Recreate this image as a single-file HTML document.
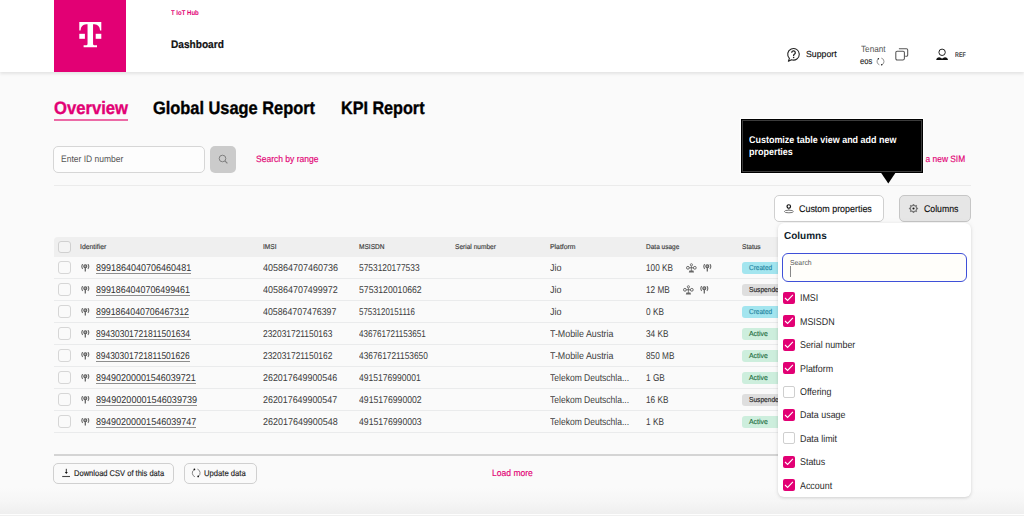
<!DOCTYPE html>
<html><head><meta charset="utf-8">
<style>
*{box-sizing:border-box;margin:0;padding:0}
html,body{width:1024px;height:516px;overflow:hidden}
body{font-family:"Liberation Sans",sans-serif;background:#fafafa;position:relative;color:#222}
.a{position:absolute;white-space:nowrap;line-height:1;transform-origin:0 0;text-rendering:geometricPrecision}
.box{position:absolute}
</style></head><body>
<div class="box" style="left:0;top:488px;width:1024px;height:26px;background:linear-gradient(#fafafa 0%,#f6f6f6 50%,#efefef 100%)"></div>
<div class="box" style="left:0;top:514px;width:1024px;height:1px;background:#fefefe"></div>
<div class="box" style="left:0;top:515px;width:1024px;height:1px;background:#f0f0f0"></div>
<div class="box" style="left:0;top:0;width:1024px;height:72px;background:#fff;box-shadow:0 2px 3px rgba(0,0,0,.09)"></div>
<div class="box" style="left:54px;top:0;width:72px;height:72px;background:#e20074">
<svg width="72" height="72" viewBox="0 0 72 72" style="position:absolute;left:0;top:0">
<path fill="#fff" d="M25.3 22 H47.3 V30.4 H46.1 C45.8 26.6 43.9 24.5 40.4 24.3 H39.05 V43.4 C39.05 44.8 39.6 45.3 41.2 45.3 H43 V47.3 H29.6 V45.3 H31.4 C33 45.3 33.55 44.8 33.55 43.4 V24.3 H32.2 C28.7 24.5 26.8 26.6 26.5 30.4 H25.3 Z"/>
<rect fill="#fff" x="25.3" y="33.8" width="5.6" height="5"/>
<rect fill="#fff" x="41.7" y="33.8" width="5.6" height="5"/>
</svg></div>
<div class="a" style="left:171.00px;top:9.67px;font-size:7px;font-weight:bold;color:#e20074;transform:scaleX(0.86);">T IoT Hub</div>
<div class="a" style="left:171.00px;top:40.49px;font-size:11px;font-weight:bold;color:#111;transform:scaleX(0.92);-webkit-text-stroke:0.2px #111;">Dashboard</div>
<svg class="a" style="left:786px;top:47px" width="16" height="16" viewBox="0 0 16 16">
<path d="M5.52 12.75 L2.4 14.3 L3.4 11.4 A5.8 5.8 0 1 1 5.52 12.75 Z" fill="none" stroke="#222" stroke-width="1.1" stroke-linejoin="round"/>
<path d="M5.7 5.7 a1.8 1.8 0 1 1 2.5 1.7 c-.5 .2 -.6 .6 -.6 1.2 v.5" fill="none" stroke="#222" stroke-width="1.25"/>
<rect x="6.95" y="9.8" width="1.35" height="1.35" fill="#222"/>
</svg>
<div class="a" style="left:806.00px;top:50.05px;font-size:8.8px;font-weight:normal;color:#111;transform:scaleX(0.995);-webkit-text-stroke:0.15px #111;">Support</div>
<div class="a" style="left:860.80px;top:44.78px;font-size:9px;font-weight:normal;color:#555;transform:scaleX(0.91);">Tenant</div>
<div class="a" style="left:860.20px;top:57.25px;font-size:8.8px;font-weight:normal;color:#222;transform:scaleX(0.86);-webkit-text-stroke:0.15px #222;">eos</div>
<svg class="a" style="left:876px;top:56.5px" width="9" height="9" viewBox="0 0 9 9">
<path d="M2.4 1.7 A3.5 3.5 0 0 0 3.4 7.8 M5.3 1.1 A3.5 3.5 0 0 1 5.7 7.8" fill="none" stroke="#888" stroke-width=".9"/>
<circle cx="2.4" cy="1.7" r=".75" fill="#222"/><circle cx="5.7" cy="7.8" r=".75" fill="#222"/>
</svg>
<svg class="a" style="left:894px;top:46px" width="16" height="16" viewBox="0 0 16 16">
<rect x="1.8" y="5.3" width="8.6" height="8.6" rx="1.3" fill="none" stroke="#555" stroke-width="1.05"/>
<path d="M4.9 2.8 H12.5 a1.2 1.2 0 0 1 1.2 1.2 V9 a1.2 1.2 0 0 1 -1.2 1.2 H11.2" fill="none" stroke="#555" stroke-width="1.05"/>
</svg>
<svg class="a" style="left:935px;top:47px" width="14" height="14" viewBox="0 0 14 14">
<circle cx="7.1" cy="5.3" r="3.2" fill="none" stroke="#222" stroke-width="1"/>
<path d="M1.2 13 C1.5 11.2 2.6 10.3 4.2 10.3 C5.4 10.3 6 11.4 7.1 11.5 C8.2 11.4 8.8 10.3 10 10.3 C11.6 10.3 12.7 11.2 13 13 Z" fill="#111"/>
</svg>
<div class="a" style="left:954.90px;top:53.04px;font-size:6.8px;font-weight:bold;color:#444;transform:scaleX(0.79);">REF</div>
<div class="a" style="left:54.00px;top:99.46px;font-size:18px;font-weight:bold;color:#e20074;transform:scaleX(0.925);-webkit-text-stroke:0.35px #e20074;">Overview</div>
<div class="box" style="left:54px;top:119px;width:74px;height:2px;background:#ec6aa6"></div>
<div class="a" style="left:153.40px;top:99.46px;font-size:18px;font-weight:bold;color:#000;transform:scaleX(0.91);-webkit-text-stroke:0.35px #000;">Global Usage Report</div>
<div class="a" style="left:341.40px;top:99.46px;font-size:18px;font-weight:bold;color:#000;transform:scaleX(0.898);-webkit-text-stroke:0.35px #000;">KPI Report</div>
<div class="box" style="left:53.4px;top:145.6px;width:151.8px;height:27.2px;background:#fdfdfd;border:1px solid #d6d6d6;border-radius:5px"></div>
<div class="a" style="left:61.30px;top:155.23px;font-size:9.3px;font-weight:normal;color:#555;transform:scaleX(0.915);">Enter ID number</div>
<div class="box" style="left:210px;top:146px;width:26px;height:26.5px;background:#cbcbcb;border-radius:5px"></div>
<svg class="a" style="left:217px;top:153px" width="13" height="13" viewBox="0 0 13 13">
<circle cx="5.5" cy="5.5" r="3.3" fill="none" stroke="#808080" stroke-width="1"/>
<path d="M7.9 7.9 L10.4 10.4" stroke="#808080" stroke-width="1.1"/>
</svg>
<div class="a" style="left:256.20px;top:155.23px;font-size:9.3px;font-weight:normal;color:#e20074;transform:scaleX(0.915);-webkit-text-stroke:0.15px #e20074;">Search by range</div>
<div class="a" style="right:58.4px;top:154.7px;font-size:9.3px;color:#e20074;-webkit-text-stroke:0.15px #e20074;transform:scaleX(0.9);transform-origin:100% 0">Register a new SIM</div>
<div class="box" style="left:54px;top:185px;width:917px;height:1px;background:#ebebeb"></div>
<div class="box" style="left:774px;top:195px;width:110px;height:27px;background:#fff;border:1px solid #d0d0d0;border-radius:5px"></div>
<svg class="a" style="left:783px;top:203px" width="12" height="11" viewBox="0 0 12 11">
<ellipse cx="5.9" cy="8.5" rx="4.5" ry="1.3" fill="none" stroke="#777" stroke-width="1"/>
<circle cx="5.8" cy="3.5" r="1.75" fill="none" stroke="#111" stroke-width="1.2"/>
<path d="M5.8 5.2 V6.6" stroke="#444" stroke-width="1"/>
</svg>
<div class="a" style="left:798.70px;top:204.99px;font-size:9.7px;font-weight:normal;color:#111;transform:scaleX(0.92);-webkit-text-stroke:0.15px #111;">Custom properties</div>
<div class="box" style="left:899px;top:195px;width:72px;height:27px;background:#e6e6e6;border:1px solid #c6c6c6;border-radius:5px"></div>
<svg class="a" style="left:908.15px;top:203.25px" width="11" height="11" viewBox="0 0 11 11">
<path fill-rule="evenodd" fill="#7a7a7a" d="M10.10 5.50 L10.10 5.65 L10.09 5.80 L10.08 5.95 L10.06 6.10 L9.77 6.21 L9.46 6.29 L9.15 6.35 L9.12 6.47 L9.09 6.59 L9.05 6.71 L9.01 6.82 L8.96 6.94 L8.92 7.05 L8.86 7.16 L8.81 7.27 L8.75 7.38 L8.68 7.48 L8.85 7.74 L9.02 8.02 L9.15 8.30 L9.06 8.42 L8.96 8.53 L8.86 8.64 L8.75 8.75 L8.64 8.86 L8.53 8.96 L8.42 9.06 L8.30 9.15 L8.02 9.02 L7.74 8.85 L7.48 8.68 L7.38 8.75 L7.27 8.81 L7.16 8.86 L7.05 8.92 L6.94 8.96 L6.82 9.01 L6.71 9.05 L6.59 9.09 L6.47 9.12 L6.35 9.15 L6.29 9.46 L6.21 9.77 L6.10 10.06 L5.95 10.08 L5.80 10.09 L5.65 10.10 L5.50 10.10 L5.35 10.10 L5.20 10.09 L5.05 10.08 L4.90 10.06 L4.79 9.77 L4.71 9.46 L4.65 9.15 L4.53 9.12 L4.41 9.09 L4.29 9.05 L4.18 9.01 L4.06 8.96 L3.95 8.92 L3.84 8.86 L3.73 8.81 L3.63 8.75 L3.52 8.68 L3.26 8.85 L2.98 9.02 L2.70 9.15 L2.58 9.06 L2.47 8.96 L2.36 8.86 L2.25 8.75 L2.14 8.64 L2.04 8.53 L1.94 8.42 L1.85 8.30 L1.98 8.02 L2.15 7.74 L2.32 7.48 L2.25 7.38 L2.19 7.27 L2.14 7.16 L2.08 7.05 L2.04 6.94 L1.99 6.82 L1.95 6.71 L1.91 6.59 L1.88 6.47 L1.85 6.35 L1.54 6.29 L1.23 6.21 L0.94 6.10 L0.92 5.95 L0.91 5.80 L0.90 5.65 L0.90 5.50 L0.90 5.35 L0.91 5.20 L0.92 5.05 L0.94 4.90 L1.23 4.79 L1.54 4.71 L1.85 4.65 L1.88 4.53 L1.91 4.41 L1.95 4.29 L1.99 4.18 L2.04 4.06 L2.08 3.95 L2.14 3.84 L2.19 3.73 L2.25 3.63 L2.32 3.52 L2.15 3.26 L1.98 2.98 L1.85 2.70 L1.94 2.58 L2.04 2.47 L2.14 2.36 L2.25 2.25 L2.36 2.14 L2.47 2.04 L2.58 1.94 L2.70 1.85 L2.98 1.98 L3.26 2.15 L3.52 2.32 L3.62 2.25 L3.73 2.19 L3.84 2.14 L3.95 2.08 L4.06 2.04 L4.18 1.99 L4.29 1.95 L4.41 1.91 L4.53 1.88 L4.65 1.85 L4.71 1.54 L4.79 1.23 L4.90 0.94 L5.05 0.92 L5.20 0.91 L5.35 0.90 L5.50 0.90 L5.65 0.90 L5.80 0.91 L5.95 0.92 L6.10 0.94 L6.21 1.23 L6.29 1.54 L6.35 1.85 L6.47 1.88 L6.59 1.91 L6.71 1.95 L6.82 1.99 L6.94 2.04 L7.05 2.08 L7.16 2.14 L7.27 2.19 L7.38 2.25 L7.48 2.32 L7.74 2.15 L8.02 1.98 L8.30 1.85 L8.42 1.94 L8.53 2.04 L8.64 2.14 L8.75 2.25 L8.86 2.36 L8.96 2.47 L9.06 2.58 L9.15 2.70 L9.02 2.98 L8.85 3.26 L8.68 3.52 L8.75 3.62 L8.81 3.73 L8.86 3.84 L8.92 3.95 L8.96 4.06 L9.01 4.18 L9.05 4.29 L9.09 4.41 L9.12 4.53 L9.15 4.65 L9.46 4.71 L9.77 4.79 L10.06 4.90 L10.08 5.05 L10.09 5.20 L10.10 5.35Z M5.5 3.0 A2.5 2.5 0 1 0 5.5 8.0 A2.5 2.5 0 1 0 5.5 3.0Z"/>
<circle cx="5.5" cy="5.5" r="1.05" fill="#111"/>
</svg>
<div class="a" style="left:923.80px;top:204.99px;font-size:9.7px;font-weight:normal;color:#111;transform:scaleX(0.9);-webkit-text-stroke:0.15px #111;">Columns</div>
<div class="box" style="left:54px;top:237px;width:917px;height:20px;background:#efefef;border-radius:4px 4px 0 0"></div>
<div class="box" style="left:58px;top:240.5px;width:12.5px;height:12.5px;border:1px solid #d0d0d0;border-radius:3px;background:#f4f4f4"></div>
<div class="a" style="left:80.00px;top:243.87px;font-size:7px;font-weight:normal;color:#3a3a3a;transform:scaleX(0.98);-webkit-text-stroke:0.15px #3a3a3a;">Identifier</div>
<div class="a" style="left:262.70px;top:243.87px;font-size:7px;font-weight:normal;color:#3a3a3a;transform:scaleX(0.94);-webkit-text-stroke:0.15px #3a3a3a;">IMSI</div>
<div class="a" style="left:358.60px;top:243.87px;font-size:7px;font-weight:normal;color:#3a3a3a;transform:scaleX(0.94);-webkit-text-stroke:0.15px #3a3a3a;">MSISDN</div>
<div class="a" style="left:454.60px;top:243.87px;font-size:7px;font-weight:normal;color:#3a3a3a;transform:scaleX(0.94);-webkit-text-stroke:0.15px #3a3a3a;">Serial number</div>
<div class="a" style="left:550.30px;top:243.87px;font-size:7px;font-weight:normal;color:#3a3a3a;transform:scaleX(0.98);-webkit-text-stroke:0.15px #3a3a3a;">Platform</div>
<div class="a" style="left:645.70px;top:243.87px;font-size:7px;font-weight:normal;color:#3a3a3a;transform:scaleX(0.93);-webkit-text-stroke:0.15px #3a3a3a;">Data usage</div>
<div class="a" style="left:741.70px;top:243.87px;font-size:7px;font-weight:normal;color:#3a3a3a;transform:scaleX(0.94);-webkit-text-stroke:0.15px #3a3a3a;">Status</div>
<div class="box" style="left:54px;top:278px;width:917px;height:1px;background:#eaebec"></div>
<div class="box" style="left:58px;top:261px;width:12.5px;height:13px;border:1px solid #d6d6d6;border-radius:3px;background:#fafafa"></div>
<svg class="a" style="left:80.1px;top:264px" width="10" height="9" viewBox="0 0 10 9"><circle cx="5.3" cy="2.2" r="1.5" fill="#aaa" stroke="#5a5a5a" stroke-width="1.1"/><path d="M5.3 3.5 V7.6" stroke="#666" stroke-width="1.3"/><path d="M2.7 0.1 Q0.9 2.4 2.7 4.8" fill="none" stroke="#6a6a6a" stroke-width="1.1"/><path d="M7.9 0.1 Q9.7 2.4 7.9 4.8" fill="none" stroke="#6a6a6a" stroke-width="1.1"/></svg>
<div class="a" style="left:96.40px;top:263.62px;font-size:9.9px;font-weight:normal;color:#333;transform:scaleX(0.9117670795399083);">8991864040706460481</div>
<div class="box" style="left:96.4px;top:273px;width:94.9px;height:1.1px;background:#8e8e8e"></div>
<div class="a" style="left:263.20px;top:263.62px;font-size:9.9px;font-weight:normal;color:#3c3c3c;transform:scaleX(0.911461506592255);">405864707460736</div>
<div class="a" style="left:358.80px;top:263.62px;font-size:9.9px;font-weight:normal;color:#3c3c3c;transform:scaleX(0.8486121040513838);">5753120177533</div>
<div class="a" style="left:550.30px;top:263.62px;font-size:9.9px;font-weight:normal;color:#3c3c3c;transform:scaleX(0.91);">Jio</div>
<div class="a" style="left:645.70px;top:263.62px;font-size:9.9px;font-weight:normal;color:#3c3c3c;transform:scaleX(0.835);">100 KB</div>
<svg class="a" style="left:686px;top:262.5px" width="11" height="10" viewBox="0 0 11 10">
<circle cx="5.4" cy="1.8" r="1.1" fill="none" stroke="#666" stroke-width=".9"/>
<path d="M5.4 2.9 V8" stroke="#777" stroke-width=".9"/>
<circle cx="1.9" cy="4.8" r="1.4" fill="none" stroke="#666" stroke-width="1"/>
<circle cx="8.8" cy="4.8" r="1.4" fill="none" stroke="#666" stroke-width="1"/>
<path d="M3.3 4.8 H7.4" stroke="#555" stroke-width=".9"/>
<path d="M2.8 9.4 L3.4 7.6 H7.4 L8 9.4Z" fill="#666"/>
</svg>
<svg class="a" style="left:702.2px;top:264px" width="10" height="9" viewBox="0 0 10 9"><circle cx="5.3" cy="2.2" r="1.5" fill="#aaa" stroke="#5a5a5a" stroke-width="1.1"/><path d="M5.3 3.5 V7.6" stroke="#666" stroke-width="1.3"/><path d="M2.7 0.1 Q0.9 2.4 2.7 4.8" fill="none" stroke="#6a6a6a" stroke-width="1.1"/><path d="M7.9 0.1 Q9.7 2.4 7.9 4.8" fill="none" stroke="#6a6a6a" stroke-width="1.1"/></svg>
<div class="box" style="left:742.2px;top:261.7px;width:40px;height:12px;border-radius:3px;background:#a3e5ef"></div>
<div class="a" style="left:749.40px;top:264.01px;font-size:7.2px;font-weight:normal;color:#1e84a0;transform:scaleX(0.906);-webkit-text-stroke:0.15px #1e84a0;">Created</div>
<div class="box" style="left:54px;top:300px;width:917px;height:1px;background:#eaebec"></div>
<div class="box" style="left:58px;top:283px;width:12.5px;height:13px;border:1px solid #d6d6d6;border-radius:3px;background:#fafafa"></div>
<svg class="a" style="left:80.1px;top:286px" width="10" height="9" viewBox="0 0 10 9"><circle cx="5.3" cy="2.2" r="1.5" fill="#aaa" stroke="#5a5a5a" stroke-width="1.1"/><path d="M5.3 3.5 V7.6" stroke="#666" stroke-width="1.3"/><path d="M2.7 0.1 Q0.9 2.4 2.7 4.8" fill="none" stroke="#6a6a6a" stroke-width="1.1"/><path d="M7.9 0.1 Q9.7 2.4 7.9 4.8" fill="none" stroke="#6a6a6a" stroke-width="1.1"/></svg>
<div class="a" style="left:96.40px;top:285.62px;font-size:9.9px;font-weight:normal;color:#333;transform:scaleX(0.9002378856995723);">8991864040706499461</div>
<div class="box" style="left:96.4px;top:295px;width:93.7px;height:1.1px;background:#8e8e8e"></div>
<div class="a" style="left:263.20px;top:285.62px;font-size:9.9px;font-weight:normal;color:#3c3c3c;transform:scaleX(0.9078059123144786);">405864707499972</div>
<div class="a" style="left:358.80px;top:285.62px;font-size:9.9px;font-weight:normal;color:#3c3c3c;transform:scaleX(0.8781657594163574);">5753120010662</div>
<div class="a" style="left:550.30px;top:285.62px;font-size:9.9px;font-weight:normal;color:#3c3c3c;transform:scaleX(0.91);">Jio</div>
<div class="a" style="left:645.70px;top:285.62px;font-size:9.9px;font-weight:normal;color:#3c3c3c;transform:scaleX(0.835);">12 MB</div>
<svg class="a" style="left:682.5px;top:284.5px" width="11" height="10" viewBox="0 0 11 10">
<circle cx="5.4" cy="1.8" r="1.1" fill="none" stroke="#666" stroke-width=".9"/>
<path d="M5.4 2.9 V8" stroke="#777" stroke-width=".9"/>
<circle cx="1.9" cy="4.8" r="1.4" fill="none" stroke="#666" stroke-width="1"/>
<circle cx="8.8" cy="4.8" r="1.4" fill="none" stroke="#666" stroke-width="1"/>
<path d="M3.3 4.8 H7.4" stroke="#555" stroke-width=".9"/>
<path d="M2.8 9.4 L3.4 7.6 H7.4 L8 9.4Z" fill="#666"/>
</svg>
<svg class="a" style="left:698.7px;top:286px" width="10" height="9" viewBox="0 0 10 9"><circle cx="5.3" cy="2.2" r="1.5" fill="#aaa" stroke="#5a5a5a" stroke-width="1.1"/><path d="M5.3 3.5 V7.6" stroke="#666" stroke-width="1.3"/><path d="M2.7 0.1 Q0.9 2.4 2.7 4.8" fill="none" stroke="#6a6a6a" stroke-width="1.1"/><path d="M7.9 0.1 Q9.7 2.4 7.9 4.8" fill="none" stroke="#6a6a6a" stroke-width="1.1"/></svg>
<div class="box" style="left:742.2px;top:283.7px;width:40px;height:12px;border-radius:3px;background:#dedede"></div>
<div class="a" style="left:749.40px;top:286.01px;font-size:7.2px;font-weight:normal;color:#222;transform:scaleX(0.92);-webkit-text-stroke:0.15px #222;">Suspended</div>
<div class="box" style="left:54px;top:322px;width:917px;height:1px;background:#eaebec"></div>
<div class="box" style="left:58px;top:305px;width:12.5px;height:13px;border:1px solid #d6d6d6;border-radius:3px;background:#fafafa"></div>
<svg class="a" style="left:80.1px;top:308px" width="10" height="9" viewBox="0 0 10 9"><circle cx="5.3" cy="2.2" r="1.5" fill="#aaa" stroke="#5a5a5a" stroke-width="1.1"/><path d="M5.3 3.5 V7.6" stroke="#666" stroke-width="1.3"/><path d="M2.7 0.1 Q0.9 2.4 2.7 4.8" fill="none" stroke="#6a6a6a" stroke-width="1.1"/><path d="M7.9 0.1 Q9.7 2.4 7.9 4.8" fill="none" stroke="#6a6a6a" stroke-width="1.1"/></svg>
<div class="a" style="left:96.40px;top:307.62px;font-size:9.9px;font-weight:normal;color:#333;transform:scaleX(0.8906302241659589);">8991864040706467312</div>
<div class="box" style="left:96.4px;top:317px;width:92.7px;height:1.1px;background:#8e8e8e"></div>
<div class="a" style="left:263.20px;top:307.62px;font-size:9.9px;font-weight:normal;color:#3c3c3c;transform:scaleX(0.8907464723515218);">405864707476397</div>
<div class="a" style="left:358.80px;top:307.62px;font-size:9.9px;font-weight:normal;color:#3c3c3c;transform:scaleX(0.8007633286985695);">5753120151116</div>
<div class="a" style="left:550.30px;top:307.62px;font-size:9.9px;font-weight:normal;color:#3c3c3c;transform:scaleX(0.91);">Jio</div>
<div class="a" style="left:645.70px;top:307.62px;font-size:9.9px;font-weight:normal;color:#3c3c3c;transform:scaleX(0.835);">0 KB</div>
<div class="box" style="left:742.2px;top:305.7px;width:40px;height:12px;border-radius:3px;background:#a3e5ef"></div>
<div class="a" style="left:749.40px;top:308.01px;font-size:7.2px;font-weight:normal;color:#1e84a0;transform:scaleX(0.906);-webkit-text-stroke:0.15px #1e84a0;">Created</div>
<div class="box" style="left:54px;top:344px;width:917px;height:1px;background:#eaebec"></div>
<div class="box" style="left:58px;top:327px;width:12.5px;height:13px;border:1px solid #d6d6d6;border-radius:3px;background:#fafafa"></div>
<svg class="a" style="left:80.1px;top:330px" width="10" height="9" viewBox="0 0 10 9"><circle cx="5.3" cy="2.2" r="1.5" fill="#aaa" stroke="#5a5a5a" stroke-width="1.1"/><path d="M5.3 3.5 V7.6" stroke="#666" stroke-width="1.3"/><path d="M2.7 0.1 Q0.9 2.4 2.7 4.8" fill="none" stroke="#6a6a6a" stroke-width="1.1"/><path d="M7.9 0.1 Q9.7 2.4 7.9 4.8" fill="none" stroke="#6a6a6a" stroke-width="1.1"/></svg>
<div class="a" style="left:96.40px;top:329.62px;font-size:9.9px;font-weight:normal;color:#333;transform:scaleX(0.861408183377742);">89430301721811501634</div>
<div class="box" style="left:96.4px;top:339px;width:94.4px;height:1.1px;background:#8e8e8e"></div>
<div class="a" style="left:263.20px;top:329.62px;font-size:9.9px;font-weight:normal;color:#3c3c3c;transform:scaleX(0.8493164038700558);">232031721150163</div>
<div class="a" style="left:358.80px;top:329.62px;font-size:9.9px;font-weight:normal;color:#3c3c3c;transform:scaleX(0.818853118221919);">436761721153651</div>
<div class="a" style="left:550.30px;top:329.62px;font-size:9.9px;font-weight:normal;color:#3c3c3c;transform:scaleX(0.896);">T-Mobile Austria</div>
<div class="a" style="left:645.70px;top:329.62px;font-size:9.9px;font-weight:normal;color:#3c3c3c;transform:scaleX(0.835);">34 KB</div>
<div class="box" style="left:742.2px;top:327.7px;width:40px;height:12px;border-radius:3px;background:#cdeedd"></div>
<div class="a" style="left:749.40px;top:330.01px;font-size:7.2px;font-weight:normal;color:#216c40;transform:scaleX(0.96);-webkit-text-stroke:0.15px #216c40;">Active</div>
<div class="box" style="left:54px;top:366px;width:917px;height:1px;background:#eaebec"></div>
<div class="box" style="left:58px;top:349px;width:12.5px;height:13px;border:1px solid #d6d6d6;border-radius:3px;background:#fafafa"></div>
<svg class="a" style="left:80.1px;top:352px" width="10" height="9" viewBox="0 0 10 9"><circle cx="5.3" cy="2.2" r="1.5" fill="#aaa" stroke="#5a5a5a" stroke-width="1.1"/><path d="M5.3 3.5 V7.6" stroke="#666" stroke-width="1.3"/><path d="M2.7 0.1 Q0.9 2.4 2.7 4.8" fill="none" stroke="#6a6a6a" stroke-width="1.1"/><path d="M7.9 0.1 Q9.7 2.4 7.9 4.8" fill="none" stroke="#6a6a6a" stroke-width="1.1"/></svg>
<div class="a" style="left:96.40px;top:351.62px;font-size:9.9px;font-weight:normal;color:#333;transform:scaleX(0.8586706573712449);">89430301721811501626</div>
<div class="box" style="left:96.4px;top:361px;width:94.1px;height:1.1px;background:#8e8e8e"></div>
<div class="a" style="left:263.20px;top:351.62px;font-size:9.9px;font-weight:normal;color:#3c3c3c;transform:scaleX(0.8493164038700558);">232031721150162</div>
<div class="a" style="left:358.80px;top:351.62px;font-size:9.9px;font-weight:normal;color:#3c3c3c;transform:scaleX(0.8432237467404284);">436761721153650</div>
<div class="a" style="left:550.30px;top:351.62px;font-size:9.9px;font-weight:normal;color:#3c3c3c;transform:scaleX(0.896);">T-Mobile Austria</div>
<div class="a" style="left:645.70px;top:351.62px;font-size:9.9px;font-weight:normal;color:#3c3c3c;transform:scaleX(0.835);">850 MB</div>
<div class="box" style="left:742.2px;top:349.7px;width:40px;height:12px;border-radius:3px;background:#cdeedd"></div>
<div class="a" style="left:749.40px;top:352.01px;font-size:7.2px;font-weight:normal;color:#216c40;transform:scaleX(0.96);-webkit-text-stroke:0.15px #216c40;">Active</div>
<div class="box" style="left:54px;top:388px;width:917px;height:1px;background:#eaebec"></div>
<div class="box" style="left:58px;top:371px;width:12.5px;height:13px;border:1px solid #d6d6d6;border-radius:3px;background:#fafafa"></div>
<svg class="a" style="left:80.1px;top:374px" width="10" height="9" viewBox="0 0 10 9"><circle cx="5.3" cy="2.2" r="1.5" fill="#aaa" stroke="#5a5a5a" stroke-width="1.1"/><path d="M5.3 3.5 V7.6" stroke="#666" stroke-width="1.3"/><path d="M2.7 0.1 Q0.9 2.4 2.7 4.8" fill="none" stroke="#6a6a6a" stroke-width="1.1"/><path d="M7.9 0.1 Q9.7 2.4 7.9 4.8" fill="none" stroke="#6a6a6a" stroke-width="1.1"/></svg>
<div class="a" style="left:96.40px;top:373.62px;font-size:9.9px;font-weight:normal;color:#333;transform:scaleX(0.9079461254881921);">89490200001546039721</div>
<div class="box" style="left:96.4px;top:383px;width:99.5px;height:1.1px;background:#8e8e8e"></div>
<div class="a" style="left:263.20px;top:373.62px;font-size:9.9px;font-weight:normal;color:#3c3c3c;transform:scaleX(0.8992761923330002);">262017649900546</div>
<div class="a" style="left:358.80px;top:373.62px;font-size:9.9px;font-weight:normal;color:#3c3c3c;transform:scaleX(0.8640925901949414);">4915176990001</div>
<div class="a" style="left:550.30px;top:373.62px;font-size:9.9px;font-weight:normal;color:#3c3c3c;transform:scaleX(0.863);">Telekom Deutschla...</div>
<div class="a" style="left:645.70px;top:373.62px;font-size:9.9px;font-weight:normal;color:#3c3c3c;transform:scaleX(0.835);">1 GB</div>
<div class="box" style="left:742.2px;top:371.7px;width:40px;height:12px;border-radius:3px;background:#cdeedd"></div>
<div class="a" style="left:749.40px;top:374.01px;font-size:7.2px;font-weight:normal;color:#216c40;transform:scaleX(0.96);-webkit-text-stroke:0.15px #216c40;">Active</div>
<div class="box" style="left:54px;top:410px;width:917px;height:1px;background:#eaebec"></div>
<div class="box" style="left:58px;top:393px;width:12.5px;height:13px;border:1px solid #d6d6d6;border-radius:3px;background:#fafafa"></div>
<svg class="a" style="left:80.1px;top:396px" width="10" height="9" viewBox="0 0 10 9"><circle cx="5.3" cy="2.2" r="1.5" fill="#aaa" stroke="#5a5a5a" stroke-width="1.1"/><path d="M5.3 3.5 V7.6" stroke="#666" stroke-width="1.3"/><path d="M2.7 0.1 Q0.9 2.4 2.7 4.8" fill="none" stroke="#6a6a6a" stroke-width="1.1"/><path d="M7.9 0.1 Q9.7 2.4 7.9 4.8" fill="none" stroke="#6a6a6a" stroke-width="1.1"/></svg>
<div class="a" style="left:96.40px;top:395.62px;font-size:9.9px;font-weight:normal;color:#333;transform:scaleX(0.9207212468518451);">89490200001546039739</div>
<div class="box" style="left:96.4px;top:405px;width:100.9px;height:1.1px;background:#8e8e8e"></div>
<div class="a" style="left:263.20px;top:395.62px;font-size:9.9px;font-weight:normal;color:#3c3c3c;transform:scaleX(0.8992761923330002);">262017649900547</div>
<div class="a" style="left:358.80px;top:395.62px;font-size:9.9px;font-weight:normal;color:#3c3c3c;transform:scaleX(0.8781657594163574);">4915176990002</div>
<div class="a" style="left:550.30px;top:395.62px;font-size:9.9px;font-weight:normal;color:#3c3c3c;transform:scaleX(0.863);">Telekom Deutschla...</div>
<div class="a" style="left:645.70px;top:395.62px;font-size:9.9px;font-weight:normal;color:#3c3c3c;transform:scaleX(0.835);">16 KB</div>
<div class="box" style="left:742.2px;top:393.7px;width:40px;height:12px;border-radius:3px;background:#dedede"></div>
<div class="a" style="left:749.40px;top:396.01px;font-size:7.2px;font-weight:normal;color:#222;transform:scaleX(0.92);-webkit-text-stroke:0.15px #222;">Suspended</div>
<div class="box" style="left:54px;top:432px;width:917px;height:1px;background:#eaebec"></div>
<div class="box" style="left:58px;top:415px;width:12.5px;height:13px;border:1px solid #d6d6d6;border-radius:3px;background:#fafafa"></div>
<svg class="a" style="left:80.1px;top:418px" width="10" height="9" viewBox="0 0 10 9"><circle cx="5.3" cy="2.2" r="1.5" fill="#aaa" stroke="#5a5a5a" stroke-width="1.1"/><path d="M5.3 3.5 V7.6" stroke="#666" stroke-width="1.3"/><path d="M2.7 0.1 Q0.9 2.4 2.7 4.8" fill="none" stroke="#6a6a6a" stroke-width="1.1"/><path d="M7.9 0.1 Q9.7 2.4 7.9 4.8" fill="none" stroke="#6a6a6a" stroke-width="1.1"/></svg>
<div class="a" style="left:96.40px;top:417.62px;font-size:9.9px;font-weight:normal;color:#333;transform:scaleX(0.9125086688323538);">89490200001546039747</div>
<div class="box" style="left:96.4px;top:427px;width:100.0px;height:1.1px;background:#8e8e8e"></div>
<div class="a" style="left:263.20px;top:417.62px;font-size:9.9px;font-weight:normal;color:#3c3c3c;transform:scaleX(0.9078059123144786);">262017649900548</div>
<div class="a" style="left:358.80px;top:417.62px;font-size:9.9px;font-weight:normal;color:#3c3c3c;transform:scaleX(0.8781657594163574);">4915176990003</div>
<div class="a" style="left:550.30px;top:417.62px;font-size:9.9px;font-weight:normal;color:#3c3c3c;transform:scaleX(0.863);">Telekom Deutschla...</div>
<div class="a" style="left:645.70px;top:417.62px;font-size:9.9px;font-weight:normal;color:#3c3c3c;transform:scaleX(0.835);">1 KB</div>
<div class="box" style="left:742.2px;top:415.7px;width:40px;height:12px;border-radius:3px;background:#cdeedd"></div>
<div class="a" style="left:749.40px;top:418.01px;font-size:7.2px;font-weight:normal;color:#216c40;transform:scaleX(0.96);-webkit-text-stroke:0.15px #216c40;">Active</div>
<div class="box" style="left:54px;top:454px;width:917px;height:1.5px;background:#d4d4d4"></div>
<div class="box" style="left:53px;top:462.5px;width:121px;height:21.5px;background:#fafafa;border:1px solid #d0d0d0;border-radius:5px"></div>
<svg class="a" style="left:62px;top:468px" width="9" height="10" viewBox="0 0 9 10">
<path d="M4.3 .8 V4.5" stroke="#333" stroke-width="1"/>
<path d="M2.8 4 L5.8 4 L4.3 6.1Z" fill="#111"/>
<path d="M.2 8.5 H8" stroke="#444" stroke-width="1.1"/>
</svg>
<div class="a" style="left:73.80px;top:469.19px;font-size:8.4px;font-weight:normal;color:#222;transform:scaleX(0.9);-webkit-text-stroke:0.15px #222;">Download CSV of this data</div>
<div class="box" style="left:183.5px;top:462.5px;width:73px;height:21.5px;background:#fafafa;border:1px solid #d0d0d0;border-radius:5px"></div>
<svg class="a" style="left:191px;top:468px" width="10" height="10" viewBox="0 0 10 10">
<path d="M3.4 1.4 A4.1 4.1 0 0 0 3.9 8.8 M6.4 1.1 A4.1 4.1 0 0 1 7.2 8.4" fill="none" stroke="#888" stroke-width="1"/>
<circle cx="3.4" cy="1.4" r=".85" fill="#111"/><circle cx="7.2" cy="8.4" r=".85" fill="#111"/>
</svg>
<div class="a" style="left:203.70px;top:469.19px;font-size:8.4px;font-weight:normal;color:#222;transform:scaleX(0.915);-webkit-text-stroke:0.15px #222;">Update data</div>
<div class="a" style="left:492.00px;top:469.21px;font-size:9.2px;font-weight:normal;color:#e20074;transform:scaleX(0.93);-webkit-text-stroke:0.15px #e20074;">Load more</div>
<div class="box" style="left:741px;top:119px;width:182px;height:54px;background:#000;box-shadow:0 0 0 1.2px #fff,inset 0 0 0 1px #000,inset 0 0 0 2px #3c3c3c"></div>
<svg class="a" style="left:880px;top:172px" width="17" height="12" viewBox="0 0 17 12"><path d="M0.5 0 L8.3 11.4 L16 0z" fill="#000"/></svg>
<div class="a" style="left:749.00px;top:135.60px;font-size:9.8px;font-weight:bold;color:#fff;transform:scaleX(0.915);">Customize table view and add new</div>
<div class="a" style="left:749.00px;top:148.10px;font-size:9.8px;font-weight:bold;color:#fff;transform:scaleX(0.915);">properties</div>
<div class="box" style="left:778px;top:223px;width:193px;height:274px;background:#fff;border-radius:6px;box-shadow:0 1px 3px rgba(0,0,0,.13),0 0 6px rgba(0,0,0,.05)"></div>
<div class="a" style="left:783.60px;top:232.07px;font-size:10.2px;font-weight:bold;color:#0d1b2a;transform:scaleX(0.98);">Columns</div>
<div class="box" style="left:781.6px;top:253.4px;width:185.4px;height:28.7px;background:#fffefa;border:1.5px solid #3f50d8;border-radius:6px"></div>
<div class="a" style="left:790.20px;top:259.41px;font-size:7.2px;font-weight:normal;color:#555;transform:scaleX(0.95);">Search</div>
<div class="box" style="left:789.8px;top:266.2px;width:1px;height:11px;background:#888"></div>
<svg class="a" style="left:783px;top:292.0px" width="12" height="12" viewBox="0 0 12 12">
<rect x="0" y="0" width="12" height="12" rx="2" fill="#e20074"/>
<path d="M2.0 6.0 L4.6 8.4 L9.9 2.8" fill="none" stroke="#fff" stroke-width="1.1"/>
</svg>
<div class="a" style="left:800.20px;top:294.32px;font-size:9.9px;font-weight:normal;color:#2a2a2a;transform:scaleX(0.9);">IMSI</div>
<svg class="a" style="left:783px;top:315.4px" width="12" height="12" viewBox="0 0 12 12">
<rect x="0" y="0" width="12" height="12" rx="2" fill="#e20074"/>
<path d="M2.0 6.0 L4.6 8.4 L9.9 2.8" fill="none" stroke="#fff" stroke-width="1.1"/>
</svg>
<div class="a" style="left:800.20px;top:317.72px;font-size:9.9px;font-weight:normal;color:#2a2a2a;transform:scaleX(0.9);">MSISDN</div>
<svg class="a" style="left:783px;top:338.8px" width="12" height="12" viewBox="0 0 12 12">
<rect x="0" y="0" width="12" height="12" rx="2" fill="#e20074"/>
<path d="M2.0 6.0 L4.6 8.4 L9.9 2.8" fill="none" stroke="#fff" stroke-width="1.1"/>
</svg>
<div class="a" style="left:800.20px;top:341.12px;font-size:9.9px;font-weight:normal;color:#2a2a2a;transform:scaleX(0.9);">Serial number</div>
<svg class="a" style="left:783px;top:362.2px" width="12" height="12" viewBox="0 0 12 12">
<rect x="0" y="0" width="12" height="12" rx="2" fill="#e20074"/>
<path d="M2.0 6.0 L4.6 8.4 L9.9 2.8" fill="none" stroke="#fff" stroke-width="1.1"/>
</svg>
<div class="a" style="left:800.20px;top:364.52px;font-size:9.9px;font-weight:normal;color:#2a2a2a;transform:scaleX(0.9);">Platform</div>
<div class="box" style="left:783px;top:385.6px;width:12px;height:12px;border:1px solid #cfcfcf;border-radius:2px;background:#fff"></div>
<div class="a" style="left:800.20px;top:387.92px;font-size:9.9px;font-weight:normal;color:#2a2a2a;transform:scaleX(0.9);">Offering</div>
<svg class="a" style="left:783px;top:409.0px" width="12" height="12" viewBox="0 0 12 12">
<rect x="0" y="0" width="12" height="12" rx="2" fill="#e20074"/>
<path d="M2.0 6.0 L4.6 8.4 L9.9 2.8" fill="none" stroke="#fff" stroke-width="1.1"/>
</svg>
<div class="a" style="left:800.20px;top:411.32px;font-size:9.9px;font-weight:normal;color:#2a2a2a;transform:scaleX(0.9);">Data usage</div>
<div class="box" style="left:783px;top:432.4px;width:12px;height:12px;border:1px solid #cfcfcf;border-radius:2px;background:#fff"></div>
<div class="a" style="left:800.20px;top:434.72px;font-size:9.9px;font-weight:normal;color:#2a2a2a;transform:scaleX(0.9);">Data limit</div>
<svg class="a" style="left:783px;top:455.79999999999995px" width="12" height="12" viewBox="0 0 12 12">
<rect x="0" y="0" width="12" height="12" rx="2" fill="#e20074"/>
<path d="M2.0 6.0 L4.6 8.4 L9.9 2.8" fill="none" stroke="#fff" stroke-width="1.1"/>
</svg>
<div class="a" style="left:800.20px;top:458.12px;font-size:9.9px;font-weight:normal;color:#2a2a2a;transform:scaleX(0.9);">Status</div>
<svg class="a" style="left:783px;top:479.2px" width="12" height="12" viewBox="0 0 12 12">
<rect x="0" y="0" width="12" height="12" rx="2" fill="#e20074"/>
<path d="M2.0 6.0 L4.6 8.4 L9.9 2.8" fill="none" stroke="#fff" stroke-width="1.1"/>
</svg>
<div class="a" style="left:800.20px;top:481.52px;font-size:9.9px;font-weight:normal;color:#2a2a2a;transform:scaleX(0.9);">Account</div>
</body></html>
